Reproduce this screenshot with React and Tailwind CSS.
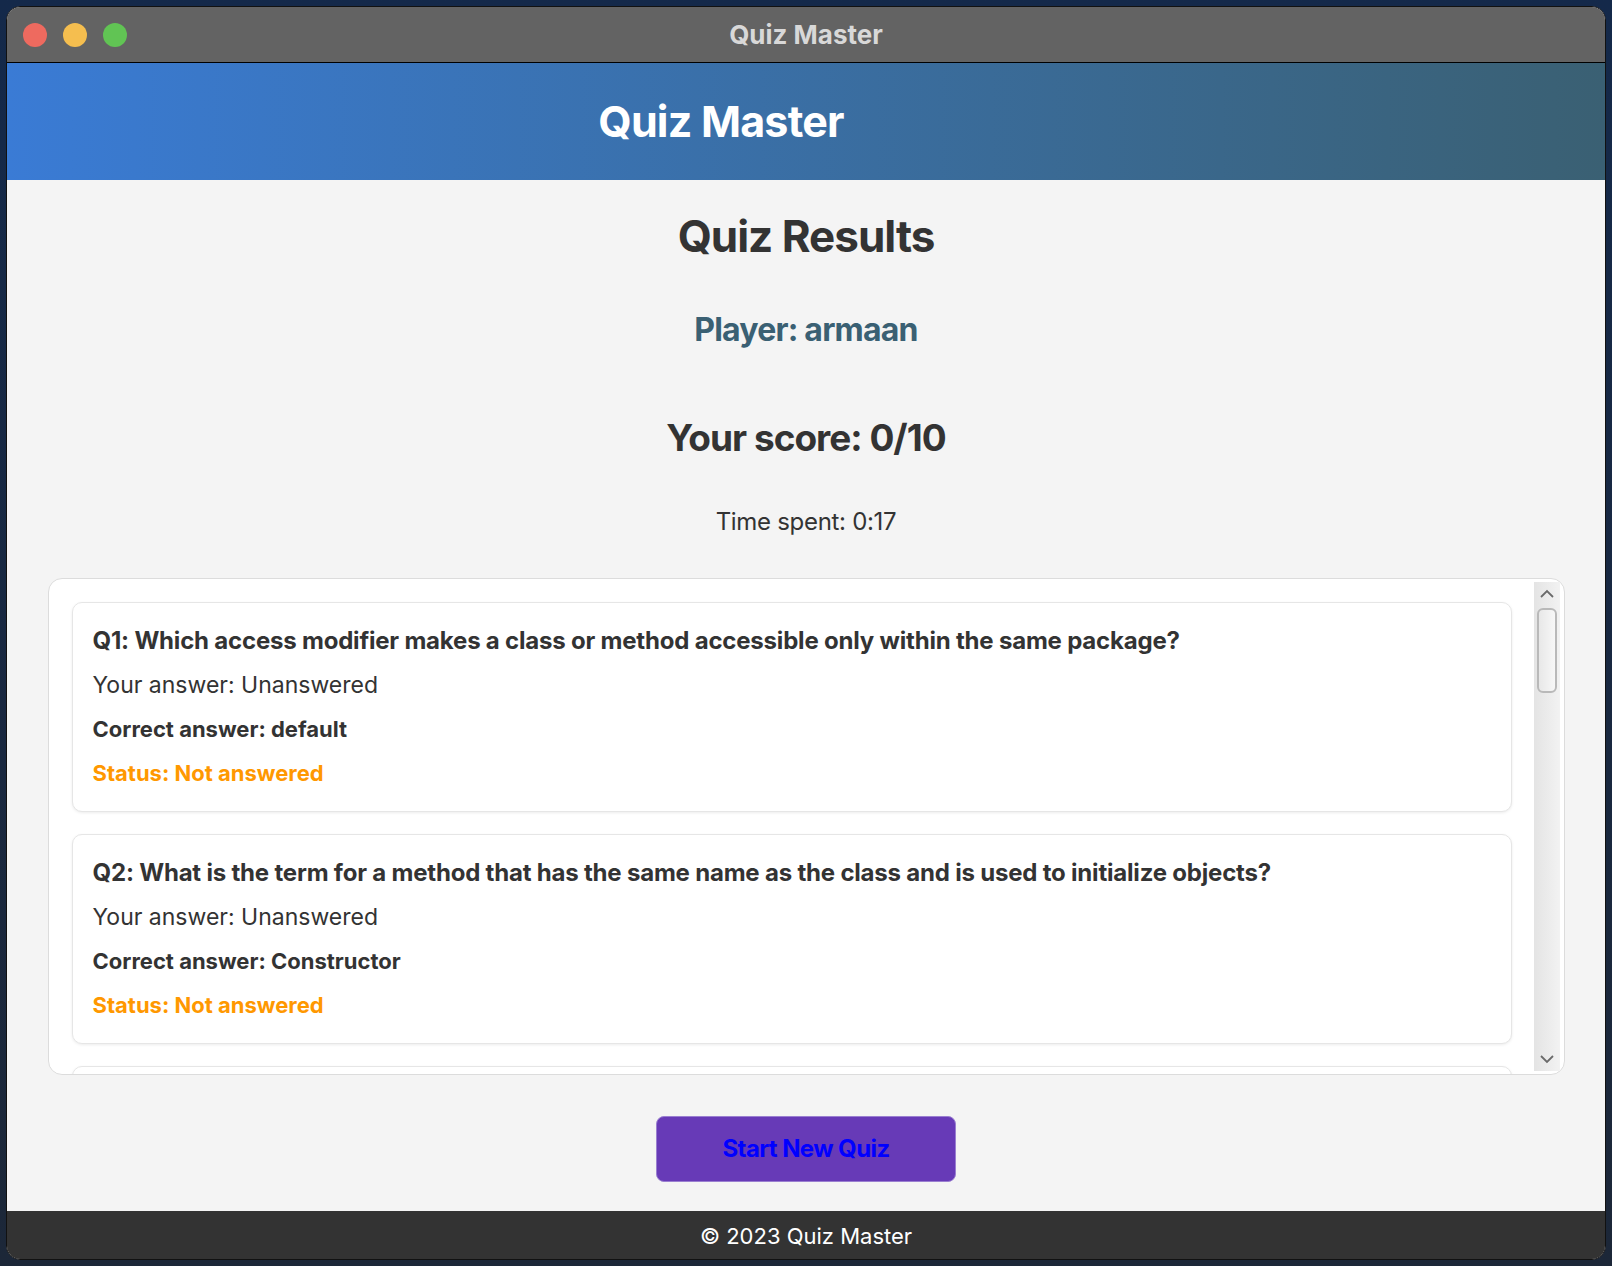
import React from 'react';

const results = [
  {
    id: 1,
    question: 'Which access modifier makes a class or method accessible only within the same package?',
    answer: 'Unanswered',
    correct: 'default',
  },
  {
    id: 2,
    question: 'What is the term for a method that has the same name as the class and is used to initialize objects?',
    answer: 'Unanswered',
    correct: 'Constructor',
  },
  {
    id: 3,
    question: 'Which keyword is used to inherit a class in Java?',
    answer: 'Unanswered',
    correct: 'extends',
  },
];

function TrafficLights() {
  return (
    <div className="flex items-center gap-[16px] pl-[16px]">
      <span className="block h-[24px] w-[24px] rounded-full bg-[#ee6a5f]" />
      <span className="block h-[24px] w-[24px] rounded-full bg-[#f5be4f]" />
      <span className="block h-[24px] w-[24px] rounded-full bg-[#61c454]" />
    </div>
  );
}

function ResultCard({ item }) {
  return (
    <div className="shrink-0 rounded-[10px] border border-[#e6e6e6] bg-white px-[20px] py-[16px] shadow-[0_1px_3px_rgba(0,0,0,0.08)]">
      <div className="text-[24px] font-bold leading-[44px] tracking-[-0.2px] text-[#333] whitespace-nowrap">
        Q{item.id}: {item.question}
      </div>
      <div className="text-[23px] leading-[44px] text-[#333]">
        Your answer: {item.answer}
      </div>
      <div className="text-[22px] font-bold leading-[44px] text-[#333]">
        Correct answer: {item.correct}
      </div>
      <div className="text-[22px] font-bold leading-[44px] text-[#ff9800]">
        Status: Not answered
      </div>
    </div>
  );
}

function ScrollBar() {
  return (
    <div className="my-[3px] mr-[4px] flex w-[26px] shrink-0 flex-col items-center bg-linear-to-r from-[#e4e4e4] to-[#f2f2f2]">
      <svg width="18" height="18" viewBox="0 0 18 18" className="mt-[3px]">
        <path d="M3 12 L9 6 L15 12" fill="none" stroke="#6a6a6a" strokeWidth="1.8" />
      </svg>
      <div className="mt-[5px] h-[85px] w-[20px] rounded-[6px] border-2 border-[#b9b9b9] bg-linear-to-r from-[#e8e8e8] to-[#f7f7f7]" />
      <div className="flex-1" />
      <svg width="18" height="18" viewBox="0 0 18 18" className="mb-[3px]">
        <path d="M3 6 L9 12 L15 6" fill="none" stroke="#6a6a6a" strokeWidth="1.8" />
      </svg>
    </div>
  );
}

export default function App() {
  return (
    <div
      className="h-[1266px] w-[1612px] bg-linear-to-b from-[#14294a] to-[#1c2738] p-[6px]"
      style={{ fontFamily: 'Inter, "Noto Sans", sans-serif' }}
    >
      <div className="flex h-full flex-col overflow-hidden rounded-[14px] border border-[#111] bg-[#f4f4f4]">
        {/* title bar */}
        <div className="relative flex h-[56px] shrink-0 items-center border-b border-black bg-[#636363]">
          <TrafficLights />
          <div className="absolute inset-0 flex items-center justify-center text-[26px] font-bold text-[#d8d8d8]">
            Quiz Master
          </div>
        </div>

        {/* header */}
        <div className="flex h-[117px] shrink-0 items-center justify-center bg-linear-to-r from-[#3a7bd5] to-[#3a6073] pr-[170px]">
          <h1 className="text-[43px] font-bold tracking-[-0.8px] text-white">Quiz Master</h1>
        </div>

        {/* body */}
        <div className="flex flex-1 flex-col items-center">
          <h2 className="mt-[28px] text-[44px] font-bold leading-[56px] tracking-[-1px] text-[#333]">
            Quiz Results
          </h2>
          <div className="mt-[46px] text-[32px] font-bold leading-[40px] tracking-[-0.8px] text-[#3a6073]">
            Player: armaan
          </div>
          <div className="mt-[64px] text-[37px] font-bold leading-[48px] tracking-[-1px] text-[#333]">
            Your score: 0/10
          </div>
          <div className="mt-[45px] text-[24px] leading-[30px] tracking-[-0.3px] text-[#333]">
            Time spent: 0:17
          </div>

          <div className="mt-[41px] flex h-[497px] w-[1517px] overflow-hidden rounded-[14px] border border-[#dcdcdc] bg-white">
            <div className="flex flex-1 flex-col gap-[22px] overflow-hidden pl-[23px] pr-[22px] pt-[23px]">
              {results.map((item) => (
                <ResultCard key={item.id} item={item} />
              ))}
            </div>
            <ScrollBar />
          </div>

          <button
            type="button"
            className="mt-[41px] h-[66px] w-[300px] rounded-[8px] border border-[#9a7fd0] bg-[#673ab7] text-[24px] font-bold tracking-[-0.6px] text-[#0000ff]"
          >
            Start New Quiz
          </button>
        </div>

        {/* footer */}
        <div className="flex h-[48px] shrink-0 items-center justify-center bg-[#333] pt-[2px] text-[22px] text-white">
          © 2023 Quiz Master
        </div>
      </div>
    </div>
  );
}
